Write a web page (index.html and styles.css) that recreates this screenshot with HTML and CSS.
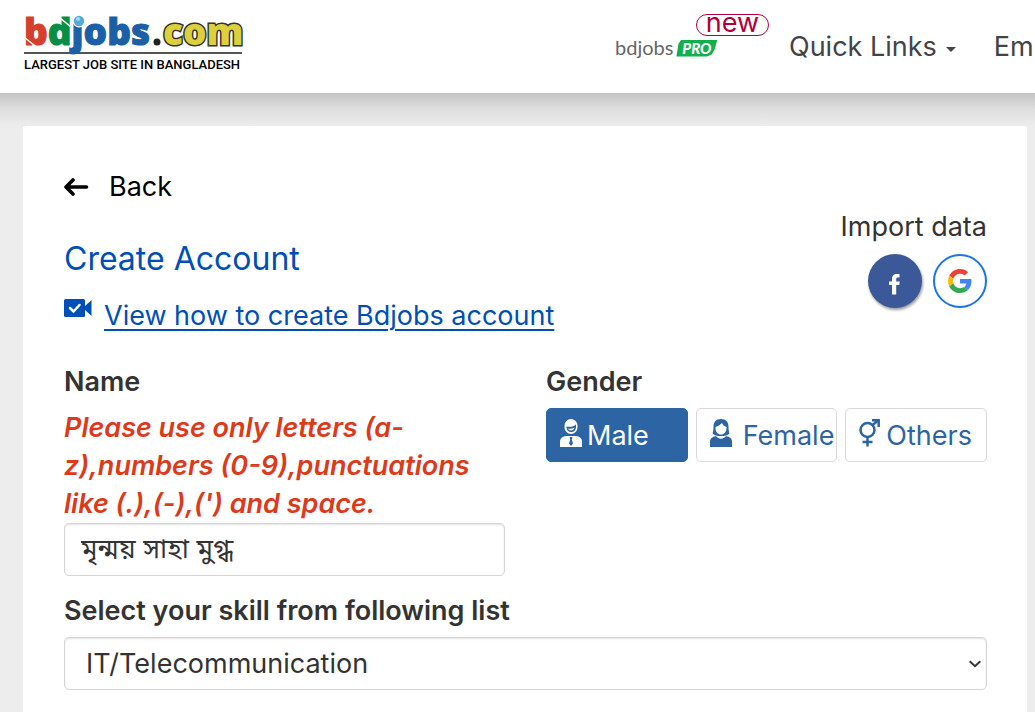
FILE: index.html
```html
<!DOCTYPE html>
<html lang="en">
<head>
<meta charset="utf-8">
<meta name="viewport" content="width=device-width, initial-scale=1">
<title>Create Account</title>
<link rel="stylesheet" href="styles.css">
</head>
<body>
<header class="site-header">
  <a class="brand" href="#" aria-label="bdjobs.com">
    <svg class="brand-mark" width="218" height="36" viewBox="0 0 218 36">
      <text class="mark-text" x="0" y="29"><tspan fill="#d4402b" stroke="#d4402b">b</tspan><tspan fill="#078f45" stroke="#078f45">d</tspan><tspan fill="#1b5fa6" stroke="#1b5fa6">jobs</tspan></text>
      <circle cx="133" cy="26" r="3.500" fill="#222"/>
      <text class="mark-text mark-com" x="139" y="29">com</text>
      <path d="M0 21 11 30M36 2l11 9" stroke="#fff" stroke-width="1.500"/>
      <circle cx="55" cy="5" r="6.500" fill="#fff"/>
      <circle cx="55" cy="5" r="5.200" fill="#55aadb"/>
      <circle cx="54" cy="3" r="2" fill="#a5daf2"/>
    </svg>
    <span class="tagline">LARGEST JOB SITE IN BANGLADESH</span>
  </a>
  <nav class="nav">
    <a class="pro" href="#">
      <span class="pro-name">bdjobs</span>
      <span class="pro-badge">PRO</span>
      <span class="pro-new">new</span>
    </a>
    <a class="nav-link" href="#">Quick Links
      <svg width="10" height="5" viewBox="0 0 10 5"><path d="M0 0h10L5 5z" fill="#444"/></svg>
    </a>
    <a class="nav-link" href="#">Em</a>
  </nav>
</header>
<main class="page">
  <section class="card">
    <a class="back" href="#">
      <svg width="25" height="20" viewBox="0 0 25 20" fill="none" stroke="#000" stroke-width="3.600" stroke-linecap="round" stroke-linejoin="round"><path d="M9 3 2 10l7 7M3 10h19.500"/></svg>
      Back
    </a>
    <div class="intro">
      <div class="intro-main">
        <h1 class="title">Create Account</h1>
        <div class="video">
          <svg class="video-icon" width="28" height="18" viewBox="0 0 28 18"><rect width="21" height="18" rx="1.500" fill="#004fb6"/><path d="m20 8 7.500-7v16L20 10z" fill="#004fb6"/><path d="m6 9 3.500 3.500L15.500 6" fill="none" stroke="#fff" stroke-width="2.500" stroke-linecap="round"/></svg>
          <a class="video-link" href="#">View how to create Bdjobs account</a>
        </div>
      </div>
      <div class="import">
        <p class="import-title">Import data</p>
        <div class="social">
          <button class="round facebook" type="button" aria-label="Facebook">
            <svg width="14" height="22" viewBox="0 0 14 22"><path d="M4 21.500V12H1V8.500h3V6c0-3.500 1.800-5 5-5h2.500v3.500H10c-1.500 0-1.800.6-1.800 2v2h3.500L11.300 12H8.200v9.500z" fill="#fff"/></svg>
          </button>
          <button class="round google" type="button" aria-label="Google">
            <svg width="24" height="24" viewBox="0 0 48 48"><path fill="#ea4335" d="M24 9.500c3.540 0 6.710 1.220 9.210 3.600l6.850-6.850C35.900 2.380 30.470 0 24 0 14.620 0 6.510 5.380 2.560 13.220l7.980 6.190C12.430 13.720 17.740 9.500 24 9.500z"/><path fill="#4285f4" d="M46.980 24.550c0-1.570-.15-3.090-.38-4.550H24v9.020h12.940c-.58 2.960-2.260 5.480-4.780 7.180l7.730 6c4.510-4.180 7.090-10.360 7.090-17.650z"/><path fill="#fbbc05" d="M10.530 28.590A14.500 14.500 0 0 1 9.770 24c0-1.600.27-3.140.76-4.590l-7.980-6.190A24 24 0 0 0 0 24c0 3.880.92 7.540 2.560 10.780z"/><path fill="#34a853" d="M24 48c6.480 0 11.930-2.130 15.890-5.810l-7.730-6c-2.150 1.450-4.920 2.300-8.160 2.300-6.260 0-11.570-4.220-13.470-9.910l-7.980 6.190C6.510 42.620 14.620 48 24 48z"/></svg>
          </button>
        </div>
      </div>
    </div>
    <form class="form">
      <div class="field">
        <label class="label" for="name">Name</label>
        <p class="error" id="name-error">Please use only letters (a-z),numbers (0-9),punctuations like (.),(-),(') and space.</p>
        <input class="control" id="name" type="text" value="মৃন্ময় সাহা মুগ্ধ" aria-describedby="name-error">
      </div>
      <fieldset class="field gender">
        <legend class="label">Gender</legend>
        <div class="options">
          <label class="option male"><input type="radio" name="gender" checked>
            <svg width="22" height="28" viewBox="0 0 22 28"><path d="M11 0a6.500 6.500 0 0 1 6.500 6.500v2a6.500 6.500 0 0 1-13 0v-2A6.500 6.500 0 0 1 11 0z" fill="currentColor"/><path d="M6.500 7.500c4 .8 7 .3 9.500-2V8c0 3-2 5-5 5s-4.500-2.500-4.500-5.500z" fill="#2d64a3"/><path d="M8 9.500c2.500.5 4.500.2 6.500-1-.5 2-1.700 3-3.500 3-1.500 0-2.500-.7-3-2z" fill="currentColor"/><path d="M0 28v-5c0-4 2.500-5.500 6.500-6h9c4 .5 6.500 2 6.500 6v5z" fill="currentColor"/><path d="M9.500 18h3l-.7 2.500 1.200 4-2 2.500-2-2.500 1.200-4z" fill="#2d64a3"/></svg>
            Male</label>
          <label class="option female"><input type="radio" name="gender">
            <svg width="22" height="28" viewBox="0 0 22 28"><path d="M11 0c5 0 7.500 3 7.500 7.500 0 3 .3 5 1 7-2 2-4.500 2.500-8.500 2.500s-6.500-.5-8.500-2.500c.7-2 1-4 1-7C3.500 3 6 0 11 0z" fill="currentColor"/><path d="M5.500 8 9 6.500 12 4l1.500 2.500 3 1.500v1c0 4-2.500 6.500-5.500 6.500S5.500 13 5.500 9z" fill="#fff"/><path d="M0 28v-5c0-3.500 2-5 6-6 2.500 3.500 7.500 3.500 10 0 4 1 6 2.500 6 6v5z" fill="currentColor"/></svg>
            Female</label>
          <label class="option others"><input type="radio" name="gender">
            <svg width="21" height="28" viewBox="0 0 21 28" fill="none" stroke="currentColor" stroke-width="2.500"><circle cx="8.500" cy="11" r="7"/><path d="M8.500 18v9.500M3.500 23h10M13.500 6l6-4.700M13 1.300h6.700V8"/></svg>
            Others</label>
        </div>
      </fieldset>
      <div class="field wide">
        <label class="label" for="skill">Select your skill from following list</label>
        <div class="select-wrap">
          <select class="control select" id="skill"><option>IT/Telecommunication</option></select>
          <svg class="chevron" width="12" height="8" viewBox="0 0 12 8" fill="none" stroke="#333" stroke-width="2"><path d="m.7 1.200 5.300 5 5.300-5"/></svg>
        </div>
      </div>
    </form>
  </section>
</main>
</body>
</html>
```
FILE: styles.css
```css
* { box-sizing: border-box; }
body {
  margin: 0;
  background: #ededed;
  color: #333;
  font-family: Inter, "Noto Sans Bengali", "Noto Sans", sans-serif;
  font-size: 27px;
  line-height: 38px;
  overflow-x: hidden;
}
a { color: inherit; text-decoration: none; }
svg { display: block; flex: none; }
h1, p { margin: 0; font-weight: inherit; }
button, input, select { font: inherit; color: inherit; }

.site-header {
  display: flex;
  align-items: flex-start;
  justify-content: space-between;
  height: 93px;
  padding-left: 24px;
  background: #fff;
  overflow: hidden;
}
.brand { padding-top: 16px; flex: none; }
.brand-mark { overflow: visible; }
.mark-text { font: 800 37px "Open Sans", sans-serif; }
.mark-com { fill: #dcd03c; stroke: #333; stroke-width: 3px; paint-order: stroke; }
.tagline {
  display: block;
  border-top: 2px solid #555;
  padding-top: 2px;
  color: #000;
  font: 500 13px/18px Roboto, sans-serif;
  white-space: nowrap;
}
.nav {
  display: flex;
  flex: none;
  width: 420px;
  gap: 38px;
  padding-top: 28px;
  color: #444;
  white-space: nowrap;
}
.pro { position: relative; display: flex; flex: none; gap: 3px; width: 136px; color: #666; }
.pro-name { font: 400 20px/38px Lato, sans-serif; }
.pro-badge {
  align-self: center;
  width: 41px;
  height: 17px;
  margin-top: 2px;
  clip-path: polygon(5% 25%, 12% 0, 100% 0, 93% 60%, 86% 88%, 75% 100%, 0 100%);
  background: #11b04b;
  color: #fff;
  font: italic 900 15px/17px Lato, sans-serif;
  text-align: center;
}
.pro-new {
  position: absolute;
  top: -14px;
  left: 81px;
  width: 73px;
  height: 22px;
  border: 1px solid #b0003a;
  border-radius: 11px;
  color: #b0003a;
  line-height: 16px;
  text-align: center;
}
.nav-link { display: flex; flex: none; align-items: center; gap: 9px; height: 38px; }
.nav-link svg { margin-top: 4px; }

.page {
  padding: 33px 8px 0 23px;
  background: linear-gradient(#c4c4c4, #dedede 16px, #ededed 33px);
}
.card { min-height: 620px; padding: 42px 40px 22px 41px; background: #fff; border-radius: 3px; }
.back { display: flex; align-items: center; gap: 20px; width: max-content; color: #000; }
.intro { display: flex; justify-content: space-between; padding-top: 2px; color: #004fb6; }
.title { margin-top: 31px; font-size: 32px; line-height: 40px; }
.video { display: flex; align-items: flex-start; gap: 12px; margin-top: 18px; }
.video-icon { margin-top: 2px; }
.video-link { text-decoration: underline; text-decoration-thickness: 2px; text-underline-offset: 4px; }
.import-title { color: #333; }
.social { display: flex; justify-content: flex-end; gap: 11px; margin-top: 8px; }
.round {
  display: grid;
  place-items: center;
  width: 54px;
  height: 54px;
  padding: 0;
  border: 0;
  border-radius: 50%;
}
.facebook { padding-top: 6px; background: #3b5998; box-shadow: 1px 2px 3px #999; }
.google { border: 2px solid #1a73e8; background: #fff; }

.form {
  display: grid;
  grid-template-columns: 1fr 1fr;
  column-gap: 41px;
  row-gap: 16px;
  margin-top: 28px;
}
.field { min-width: 0; margin: 0; padding: 0; border: 0; }
.wide { grid-column: 1 / -1; }
.label { display: block; padding: 0; font-weight: 600; }
.error { margin-top: 8px; color: #dc3a19; font-style: italic; font-weight: 600; }
.control {
  display: block;
  width: 100%;
  height: 53px;
  padding: 2px 16px 0;
  border: 1px solid #d5d5d5;
  border-radius: 5px;
  background: #fff;
  box-shadow: inset 0 1px 2px #e2e2e2;
}
.options { display: flex; gap: 8px; margin-top: 7px; }
.option {
  display: flex;
  flex: 1 1 0;
  align-items: center;
  height: 54px;
  padding: 1px 0 0 13px;
  border: 1px solid #d9d9d9;
  border-radius: 5px;
  color: #2d64a3;
  white-space: nowrap;
}
.option input { position: absolute; opacity: 0; }
.option svg { margin-bottom: 5px; }
.male { gap: 5px; border-color: #2d64a3; background: #2d64a3; color: #fff; }
.female { gap: 11px; }
.others { gap: 6px; }
.select-wrap { position: relative; margin-top: 7px; }
.select { padding: 0 21px; appearance: none; }
.chevron { position: absolute; right: 6px; top: 23px; pointer-events: none; }
```
